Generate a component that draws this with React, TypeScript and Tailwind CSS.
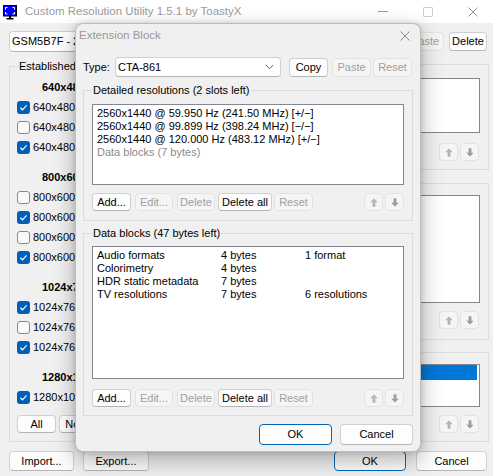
import React from "react";

type BtnProps = {
  children?: React.ReactNode;
  disabled?: boolean;
  def?: boolean;
  className?: string;
};

function Btn({ children, disabled, def, className = "" }: BtnProps) {
  let look =
    "bg-[#fdfdfd] border-[#d0d0d0] border-b-[#b4b4b4] text-black";
  if (disabled) look = "bg-[#f5f5f5] border-[#e2e2e2] text-[#a0a0a0]";
  if (def) look = "bg-[#fdfdfd] border-[#0067c0] text-black";
  return (
    <div
      className={`flex shrink-0 items-center justify-center rounded-[4px] border text-[11px] leading-[13px] ${look} ${className}`}
    >
      {children}
    </div>
  );
}

function Arrow({ down, color }: { down?: boolean; color: string }) {
  return (
    <svg width="8" height="9" viewBox="0 0 8 9" className={down ? "rotate-180" : ""}>
      <path d="M4 0.5 L7.8 4.3 H5.4 V8.8 H2.6 V4.3 H0.2 Z" fill={color} />
    </svg>
  );
}

function UpDown({ className = "" }: { className?: string }) {
  return (
    <div className={`flex gap-[2px] ${className}`}>
      <Btn disabled className="w-[19px] h-[18px]">
        <Arrow color="#b4b4b4" />
      </Btn>
      <Btn disabled className="w-[19px] h-[18px]">
        <Arrow down color="#9c9c9c" />
      </Btn>
    </div>
  );
}

function Chevron() {
  return (
    <svg width="9" height="6" viewBox="0 0 9 6">
      <path d="M0.8 1 L4.5 4.7 L8.2 1" stroke="#606060" strokeWidth="1" fill="none" />
    </svg>
  );
}

function Combo({ text, className = "" }: { text: string; className?: string }) {
  return (
    <div
      className={`flex shrink-0 items-center rounded-[4px] border border-[#d0d0d0] border-b-[#b4b4b4] bg-white pl-[2px] pr-[6px] ${className}`}
    >
      <span className="whitespace-nowrap">{text}</span>
      <span className="ml-auto flex">
        <Chevron />
      </span>
    </div>
  );
}

function Check({ checked }: { checked: boolean }) {
  return checked ? (
    <div className="flex h-[13px] w-[13px] shrink-0 items-center justify-center rounded-[3px] bg-[#005fb8]">
      <svg width="13" height="13" viewBox="0 0 13 13">
        <path d="M3.4 6.8 L5.5 8.8 L9.6 4.4" stroke="white" strokeWidth="1.2" fill="none" />
      </svg>
    </div>
  ) : (
    <div className="h-[13px] w-[13px] shrink-0 rounded-[3px] border border-[#8a8a8a] bg-[#f9f9f9]" />
  );
}

function CheckRow({ checked, label }: { checked: boolean; label: string }) {
  return (
    <div className="flex h-[20px] items-center">
      <Check checked={checked} />
      <span className="ml-[3px] whitespace-nowrap">{label}</span>
    </div>
  );
}

function Header({ text, first }: { text: string; first?: boolean }) {
  return (
    <div className={`flex h-[20px] items-center pl-[25px] font-bold ${first ? "" : "mt-[10px]"}`}>
      {text}
    </div>
  );
}

function AppIcon() {
  return (
    <svg width="16" height="16" viewBox="0 0 16 16" className="ml-[2px] shrink-0">
      <rect x="1.5" y="1.5" width="13" height="10.5" fill="#0000ff" stroke="#000" strokeWidth="1" />
      <path
        d="M3.5 5.5V3.5h2M10.5 3.5h2v2M12.5 8v2h-2M5.5 10h-2V8"
        stroke="#fff"
        strokeWidth="1"
        fill="none"
      />
      <rect x="7" y="12" width="2" height="2" fill="#000" />
      <rect x="4.5" y="14" width="7" height="1.5" fill="#000" />
    </svg>
  );
}

const detailed = [
  "2560x1440 @ 59.950 Hz (241.50 MHz) [+/\u2212]",
  "2560x1440 @ 99.899 Hz (398.24 MHz) [\u2212/\u2212]",
  "2560x1440 @ 120.000 Hz (483.12 MHz) [+/\u2212]",
];

const blocks = [
  ["Audio formats", "4 bytes", "1 format"],
  ["Colorimetry", "4 bytes", ""],
  ["HDR static metadata", "7 bytes", ""],
  ["TV resolutions", "7 bytes", "6 resolutions"],
];

function ButtonRow() {
  return (
    <div className="flex h-[18px] items-center">
      <Btn className="w-[39px] h-[18px]">Add...</Btn>
      <Btn disabled className="ml-[4px] w-[38px] h-[18px]">
        Edit...
      </Btn>
      <Btn disabled className="ml-[4px] w-[38px] h-[18px]">
        Delete
      </Btn>
      <Btn className="ml-[3px] w-[54px] h-[18px]">Delete all</Btn>
      <Btn disabled className="ml-[2px] w-[39px] h-[18px]">
        Reset
      </Btn>
      <UpDown className="ml-auto" />
    </div>
  );
}

function Dialog() {
  return (
    <div className="absolute left-[75px] top-[23px] flex h-[429px] w-[346px] flex-col rounded-[8px] border border-[#bcbcbc] bg-[#f0f0f0] shadow-[0_8px_22px_rgba(0,0,0,0.30),0_0_6px_rgba(0,0,0,0.14)]">
      <div className="flex h-[24px] items-center pl-[3px]">
        <span className="text-[11.5px] text-[#9a9a9a]">Extension Block</span>
        <svg width="10" height="10" viewBox="0 0 10 10" className="ml-auto mr-[10px]">
          <path d="M0.5 0.5 L9.5 9.5 M9.5 0.5 L0.5 9.5" stroke="#8a8a8a" strokeWidth="1" />
        </svg>
      </div>
      <div className="flex flex-col px-[7px] pt-[9px]">
        <div className="flex h-[20px] items-center">
          <span className="w-[32px]">Type:</span>
          <Combo text="CTA-861" className="h-[20px] w-[166px]" />
          <Btn className="ml-[8px] h-[19px] w-[39px]">Copy</Btn>
          <Btn disabled className="ml-[4px] h-[19px] w-[39px]">
            Paste
          </Btn>
          <Btn disabled className="ml-[2px] h-[19px] w-[39px]">
            Reset
          </Btn>
        </div>

        <fieldset className="mt-[6px] h-[138px] min-w-0 border border-[#dcdcdc] px-[8px]">
          <legend className="px-[1px] leading-[14px]">Detailed resolutions (2 slots left)</legend>
          <div className="mt-[7px] h-[81px] border border-[#828790] bg-white pl-[4px] pt-[2px] leading-[13px]">
            {detailed.map((d) => (
              <div key={d} className="whitespace-nowrap">
                {d}
              </div>
            ))}
            <div className="text-[#8a8a8a]">Data blocks (7 bytes)</div>
          </div>
          <div className="mt-[8px]">
            <ButtonRow />
          </div>
        </fieldset>

        <fieldset className="mt-[5px] h-[190px] min-w-0 border border-[#dcdcdc] px-[8px]">
          <legend className="px-[1px] leading-[14px]">Data blocks (47 bytes left)</legend>
          <div className="mt-[6px] h-[133px] border border-[#828790] bg-white pl-[4px] pt-[2px] leading-[13px]">
            {blocks.map((b) => (
              <div key={b[0]} className="flex whitespace-nowrap">
                <span className="w-[124px]">{b[0]}</span>
                <span className="w-[84px]">{b[1]}</span>
                <span>{b[2]}</span>
              </div>
            ))}
          </div>
          <div className="mt-[10px]">
            <ButtonRow />
          </div>
        </fieldset>

        <div className="mt-[8px] flex justify-end">
          <Btn def className="h-[21px] w-[73px]">
            OK
          </Btn>
          <Btn className="ml-[8px] h-[21px] w-[73px]">Cancel</Btn>
        </div>
      </div>
    </div>
  );
}

export default function App() {
  return (
    <div className="relative h-[476px] w-[493px] overflow-hidden bg-[#f0f0f0] font-['Liberation_Sans',Arial,sans-serif] text-[11px] text-black">
      {/* title bar */}
      <div className="flex h-[23px] items-center bg-white">
        <AppIcon />
        <span className="ml-[7px] whitespace-nowrap text-[11.5px] text-[#9a9a9a]">
          Custom Resolution Utility 1.5.1 by ToastyX
        </span>
        <div className="ml-auto mr-[-2px] flex h-full items-center">
          <div className="flex w-[45px] justify-center">
            <div className="h-[1px] w-[10px] bg-[#9a9a9a]" />
          </div>
          <div className="flex w-[45px] justify-center">
            <div className="h-[10px] w-[10px] rounded-[1px] border border-[#cfcfcf]" />
          </div>
          <div className="flex w-[45px] justify-center">
            <svg width="10" height="10" viewBox="0 0 10 10">
              <path d="M0.5 0.5 L9.5 9.5 M9.5 0.5 L0.5 9.5" stroke="#9a9a9a" strokeWidth="1" />
            </svg>
          </div>
        </div>
      </div>

      {/* main window body */}
      <div className="flex flex-col pl-[9px] pr-[4px] pt-[8px]">
        <div className="flex h-[21px] items-center">
          <Combo text="GSM5B7F - 27GL850" className="h-[21px] w-[200px]" />
          <div className="ml-auto mr-[2px] flex">
            <Btn disabled className="h-[19px] w-[38px]">
              Paste
            </Btn>
            <Btn className="ml-[5px] h-[19px] w-[38px]">Delete</Btn>
          </div>
        </div>

        <div className="mt-[7px] flex h-[383px]">
          <fieldset className="w-[140px] min-w-0 border border-[#dcdcdc] px-[7px] pb-[8px]">
            <legend className="ml-[2px] px-[0px] leading-[14px]">Established resolutions</legend>
            <div className="pt-[4px]">
              <Header text="640x480" first />
              <CheckRow checked label="640x480 @ 60 Hz" />
              <CheckRow checked={false} label="640x480 @ 67 Hz" />
              <CheckRow checked label="640x480 @ 75 Hz" />
              <Header text="800x600" />
              <CheckRow checked={false} label="800x600 @ 56 Hz" />
              <CheckRow checked label="800x600 @ 60 Hz" />
              <CheckRow checked={false} label="800x600 @ 72 Hz" />
              <CheckRow checked label="800x600 @ 75 Hz" />
              <Header text="1024x768" />
              <CheckRow checked label="1024x768 @ 60 Hz" />
              <CheckRow checked={false} label="1024x768 @ 70 Hz" />
              <CheckRow checked label="1024x768 @ 75 Hz" />
              <Header text="1280x1024" />
              <CheckRow checked label="1280x1024 @ 75 Hz" />
              <div className="mt-[8px] flex">
                <Btn className="h-[18px] w-[39px]">All</Btn>
                <Btn className="ml-[3px] h-[18px] w-[39px]">None</Btn>
              </div>
            </div>
          </fieldset>

          <div className="ml-auto flex w-[170px] flex-col pt-[5px]">
            <div className="flex h-[106px] flex-col border border-[#dcdcdc] pl-[8px] pr-[8px] pt-[13px]">
              <div className="h-[55px] border border-[#828790] bg-white" />
              <UpDown className="ml-auto mr-[1px] mt-[10px]" />
            </div>
            <div className="mt-[13px] flex h-[157px] flex-col border border-[#dcdcdc] pl-[8px] pr-[8px] pt-[11px]">
              <div className="h-[108px] border border-[#828790] bg-white" />
              <UpDown className="ml-auto mr-[1px] mt-[8px]" />
            </div>
            <div className="mt-[12px] flex h-[90px] flex-col border border-[#dcdcdc] pl-[8px] pr-[8px] pt-[11px]">
              <div className="h-[43px] border border-[#828790] bg-white pr-[2px]">
                <div className="h-[15px] bg-[#0078d7]" />
              </div>
              <UpDown className="ml-auto mr-[1px] mt-[8px]" />
            </div>
          </div>
        </div>

        <div className="mt-[9px] flex h-[20px] items-center">
          <Btn className="h-[20px] w-[65px]">Import...</Btn>
          <Btn className="ml-[9px] h-[20px] w-[66px]">Export...</Btn>
          <Btn def className="ml-auto h-[20px] w-[72px]">
            OK
          </Btn>
          <Btn className="ml-[10px] mr-[2px] h-[20px] w-[71px]">Cancel</Btn>
        </div>
      </div>

      <Dialog />
    </div>
  );
}
